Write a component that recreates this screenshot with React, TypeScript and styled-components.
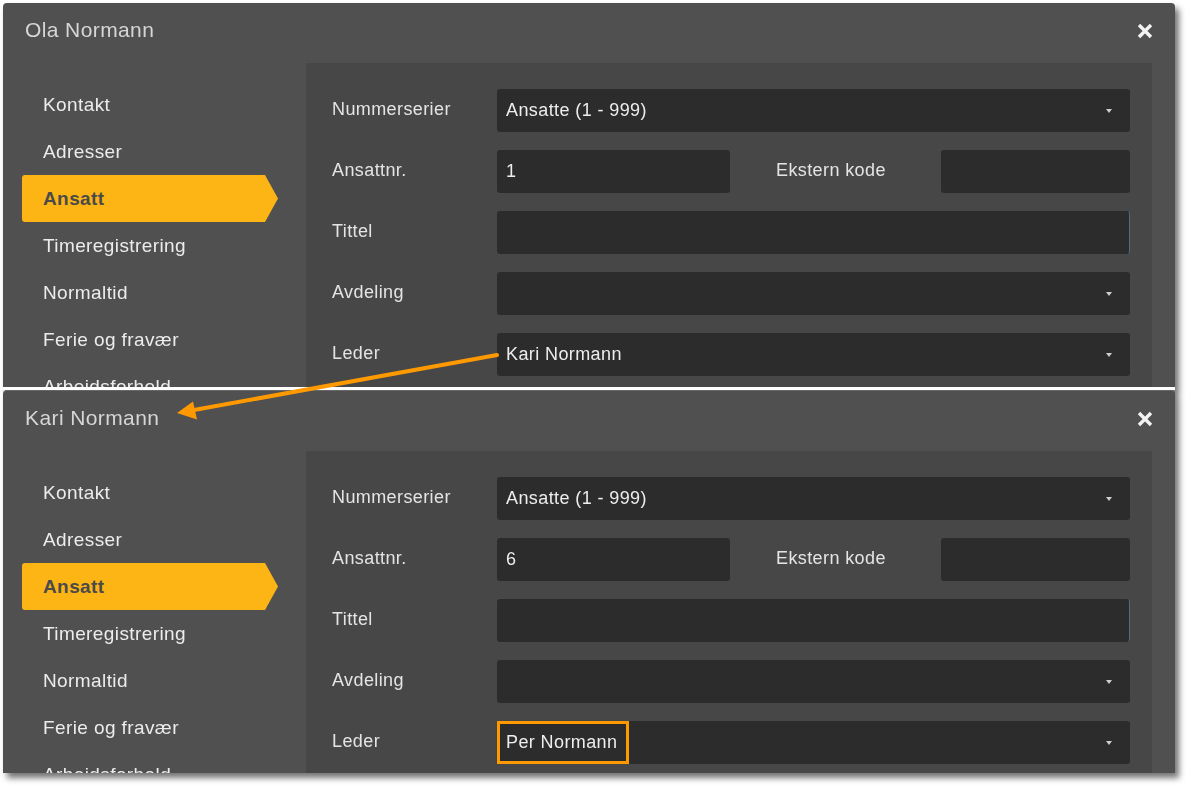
import React from 'react';
import styled, { createGlobalStyle } from 'styled-components';

const GlobalStyle = createGlobalStyle`
  html, body {
    margin: 0;
    padding: 0;
    background: #ffffff;
  }
  body {
    font-family: "Liberation Sans", Arial, sans-serif;
  }
`;

// Page + composite of the two cropped dialogs
const Stage = styled.div`
  position: relative;
  width: 1190px;
  height: 787px;
  padding: 3px 0 0 3px;
  box-sizing: border-box;
  background: #ffffff;
  overflow: hidden;
`;

const Composite = styled.div`
  width: 1172px;
  display: flex;
  flex-direction: column;
  filter: drop-shadow(4px 5px 3px rgba(0, 0, 0, 0.55));
`;

const Separator = styled.div`
  height: 3px;
  background: #ffffff;
`;

const Dialog = styled.div<{ $height: number; $topLine?: boolean }>`
  height: ${p => p.$height}px;
  background: #505050;
  border-radius: 4px 4px 0 0;
  border-top: ${p => (p.$topLine ? '1px solid #676767' : 'none')};
  box-sizing: border-box;
  overflow: hidden;
  display: flex;
  flex-direction: column;
`;

const Header = styled.div`
  height: 60px;
  flex-shrink: 0;
  box-sizing: border-box;
  padding: 0 22px 6px 22px;
  display: flex;
  align-items: center;
  justify-content: space-between;
`;

const Title = styled.div`
  font-size: 21px;
  letter-spacing: 0.4px;
  color: #d6d6d6;
`;

const CloseButton = styled.div`
  width: 17px;
  height: 17px;
  display: flex;
  align-items: center;
  justify-content: center;
  margin-top: 2px;
`;

const Body = styled.div`
  flex: 1;
  display: flex;
`;

const Sidebar = styled.div`
  width: 303px;
  flex-shrink: 0;
  padding-top: 18px;
  box-sizing: border-box;
`;

const NavItem = styled.div<{ $active?: boolean }>`
  height: 47px;
  width: 256px;
  margin-left: 19px;
  padding-left: 21px;
  box-sizing: border-box;
  display: flex;
  align-items: center;
  font-size: 19px;
  letter-spacing: 0.4px;
  white-space: nowrap;
  color: ${p => (p.$active ? '#4a4a4a' : '#ececec')};
  font-weight: ${p => (p.$active ? 700 : 400)};
  background: ${p => (p.$active ? '#fdb515' : 'transparent')};
  border-radius: 3px 0 0 3px;
  clip-path: ${p =>
    p.$active
      ? 'polygon(0 0, calc(100% - 13px) 0, 100% 50%, calc(100% - 13px) 100%, 0 100%)'
      : 'none'};
`;

const FormPanel = styled.div`
  flex: 1;
  margin-right: 23px;
  background: #474747;
  padding: 26px 22px 0 26px;
  display: flex;
  flex-direction: column;
  gap: 18px;
`;

const Row = styled.div`
  display: flex;
  height: 43px;
`;

const Label = styled.div<{ $gapLeft?: number }>`
  width: 165px;
  flex-shrink: 0;
  height: 40px;
  margin-left: ${p => p.$gapLeft || 0}px;
  display: flex;
  align-items: center;
  font-size: 18px;
  letter-spacing: 0.4px;
  color: #e4e4e4;
`;

const Field = styled.div<{ $width?: number; $focusEdge?: boolean }>`
  flex: ${p => (p.$width ? '0 0 auto' : '1')};
  width: ${p => (p.$width ? `${p.$width}px` : 'auto')};
  height: 43px;
  box-sizing: border-box;
  background: #2c2c2c;
  border-radius: 3px;
  border-right: ${p => (p.$focusEdge ? '1px solid #4f6c80' : 'none')};
  padding: 0 18px 0 9px;
  display: flex;
  align-items: center;
  justify-content: space-between;
  font-size: 18px;
  letter-spacing: 0.4px;
  color: #ededed;
`;

const Value = styled.span<{ $marked?: boolean }>`
  display: flex;
  align-items: center;
  white-space: nowrap;
  ${p =>
    p.$marked &&
    `
    align-self: stretch;
    margin-left: -9px;
    padding: 0 9px 0 6px;
    border: 3px solid #ff9900;
  `}
`;

const Caret = styled.span`
  width: 0;
  height: 0;
  border-left: 3.5px solid transparent;
  border-right: 3.5px solid transparent;
  border-top: 4px solid #cfcfcf;
`;

const Annotation = styled.svg`
  position: absolute;
  left: 0;
  top: 0;
  pointer-events: none;
`;

const navItems = [
  'Kontakt',
  'Adresser',
  'Ansatt',
  'Timeregistrering',
  'Normaltid',
  'Ferie og fravær',
  'Arbeidsforhold',
];

const CloseIcon = () => (
  <svg width="16" height="16" viewBox="0 0 16 16">
    <path d="M2 2 L14 14 M14 2 L2 14" stroke="#f2f2f2" strokeWidth="3.4" strokeLinecap="butt" />
  </svg>
);

interface EmployeeDialogProps {
  name: string;
  nr: string;
  leder: string;
  height: number;
  topLine?: boolean;
  markLeder?: boolean;
}

const EmployeeDialog: React.FC<EmployeeDialogProps> = ({ name, nr, leder, height, topLine, markLeder }) => (
  <Dialog $height={height} $topLine={topLine}>
    <Header>
      <Title>{name}</Title>
      <CloseButton>
        <CloseIcon />
      </CloseButton>
    </Header>
    <Body>
      <Sidebar>
        {navItems.map(item => (
          <NavItem key={item} $active={item === 'Ansatt'}>
            {item}
          </NavItem>
        ))}
      </Sidebar>
      <FormPanel>
        <Row>
          <Label>Nummerserier</Label>
          <Field>
            <Value>Ansatte (1 - 999)</Value>
            <Caret />
          </Field>
        </Row>
        <Row>
          <Label>Ansattnr.</Label>
          <Field $width={233}>
            <Value>{nr}</Value>
          </Field>
          <Label $gapLeft={46}>Ekstern kode</Label>
          <Field />
        </Row>
        <Row>
          <Label>Tittel</Label>
          <Field $focusEdge />
        </Row>
        <Row>
          <Label>Avdeling</Label>
          <Field>
            <span />
            <Caret />
          </Field>
        </Row>
        <Row>
          <Label>Leder</Label>
          <Field>
            <Value $marked={markLeder}>{leder}</Value>
            <Caret />
          </Field>
        </Row>
      </FormPanel>
    </Body>
  </Dialog>
);

const App: React.FC = () => (
  <>
    <GlobalStyle />
    <Stage>
      <Composite>
        <EmployeeDialog name="Ola Normann" nr="1" leder="Kari Normann" height={384} />
        <Separator />
        <EmployeeDialog name="Kari Normann" nr="6" leder="Per Normann" height={383} topLine markLeder />
      </Composite>
      {/* arrow from the Leder value to the next dialog's title */}
      <Annotation width="1190" height="787" viewBox="0 0 1190 787">
        <line x1="497" y1="355" x2="194" y2="410" stroke="#ff9900" strokeWidth="4" strokeLinecap="round" />
        <polygon points="177,413 197,419.5 193,401.5" fill="#ff9900" />
      </Annotation>
    </Stage>
  </>
);

export default App;
